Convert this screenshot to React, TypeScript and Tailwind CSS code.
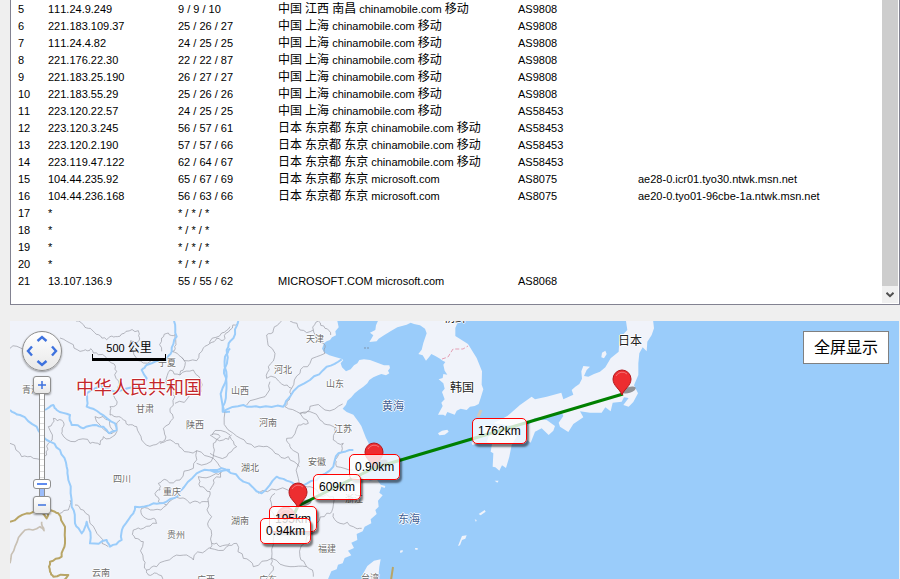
import React, { useState } from "react";

type Hop = { n: number; ip: string; rtt: string; place?: string; asn?: string; host?: string };

const hops: Hop[] = [
  { n: 5, ip: "111.24.9.249", rtt: "9 / 9 / 10", place: "中国 江西 南昌 chinamobile.com 移动", asn: "AS9808" },
  { n: 6, ip: "221.183.109.37", rtt: "25 / 26 / 27", place: "中国 上海 chinamobile.com 移动", asn: "AS9808" },
  { n: 7, ip: "111.24.4.82", rtt: "24 / 25 / 25", place: "中国 上海 chinamobile.com 移动", asn: "AS9808" },
  { n: 8, ip: "221.176.22.30", rtt: "22 / 22 / 87", place: "中国 上海 chinamobile.com 移动", asn: "AS9808" },
  { n: 9, ip: "221.183.25.190", rtt: "26 / 27 / 27", place: "中国 上海 chinamobile.com 移动", asn: "AS9808" },
  { n: 10, ip: "221.183.55.29", rtt: "25 / 26 / 26", place: "中国 上海 chinamobile.com 移动", asn: "AS9808" },
  { n: 11, ip: "223.120.22.57", rtt: "24 / 25 / 25", place: "中国 上海 chinamobile.com 移动", asn: "AS58453" },
  { n: 12, ip: "223.120.3.245", rtt: "56 / 57 / 61", place: "日本 东京都 东京 chinamobile.com 移动", asn: "AS58453" },
  { n: 13, ip: "223.120.2.190", rtt: "57 / 57 / 66", place: "日本 东京都 东京 chinamobile.com 移动", asn: "AS58453" },
  { n: 14, ip: "223.119.47.122", rtt: "62 / 64 / 67", place: "日本 东京都 东京 chinamobile.com 移动", asn: "AS58453" },
  { n: 15, ip: "104.44.235.92", rtt: "65 / 67 / 69", place: "日本 东京都 东京 microsoft.com", asn: "AS8075", host: "ae28-0.icr01.tyo30.ntwk.msn.net" },
  { n: 16, ip: "104.44.236.168", rtt: "56 / 63 / 66", place: "日本 东京都 东京 microsoft.com", asn: "AS8075", host: "ae20-0.tyo01-96cbe-1a.ntwk.msn.net" },
  { n: 17, ip: "*", rtt: "* / * / *" },
  { n: 18, ip: "*", rtt: "* / * / *" },
  { n: 19, ip: "*", rtt: "* / * / *" },
  { n: 20, ip: "*", rtt: "* / * / *" },
  { n: 21, ip: "13.107.136.9", rtt: "55 / 55 / 62", place: "MICROSOFT.COM microsoft.com", asn: "AS8068" },
];

// Chinese runs are set one pixel larger than the Latin text around them.
function Mixed({ text }: { text: string }) {
  return (
    <>
      {text.split(/([\u4e00-\u9fff]+)/).map((part, i) =>
        i % 2 ? <span key={i} className="text-[12px]">{part}</span> : part,
      )}
    </>
  );
}

function HopTable() {
  return (
    <table className="ml-[7px] mt-px grow table-fixed border-collapse self-start text-[11px] leading-[17px] text-black [font-kerning:none]">
      <colgroup>
        <col className="w-[30px]" />
        <col className="w-[130px]" />
        <col className="w-[100px]" />
        <col className="w-[240px]" />
        <col className="w-[120px]" />
        <col />
      </colgroup>
      <tbody>
        {hops.map((h) => (
          <tr key={h.n} className="h-[17px] whitespace-nowrap align-top">
            <td className="p-0">{h.n}</td>
            <td className="p-0">{h.ip}</td>
            <td className="p-0">{h.rtt}</td>
            <td className="p-0"><div className="h-[17px]"><Mixed text={h.place ?? ""} /></div></td>
            <td className="p-0">{h.asn}</td>
            <td className="p-0">{h.host}</td>
          </tr>
        ))}
      </tbody>
    </table>
  );
}

// Deterministic midpoint displacement: gives straight segments the jitter of a real border.
function rough(points: number[], amount: number) {
  let pts: [number, number][] = [];
  for (let i = 0; i < points.length; i += 2) pts.push([points[i], points[i + 1]]);
  let seed = points.length * 37 + Math.round(points[0]) + 11;
  const rnd = () => {
    seed = (seed * 1103515245 + 12345) % 2147483648;
    return seed / 2147483648 - 0.5;
  };
  for (let pass = 0; pass < 2; pass++) {
    const next: [number, number][] = [pts[0]];
    for (let i = 1; i < pts.length; i++) {
      const [x0, y0] = pts[i - 1];
      const [x1, y1] = pts[i];
      const len = Math.hypot(x1 - x0, y1 - y0);
      const d = rnd() * len * amount;
      if (len > 8) next.push([(x0 + x1) / 2 - ((y1 - y0) / len) * d, (y0 + y1) / 2 + ((x1 - x0) / len) * d]);
      next.push(pts[i]);
    }
    pts = next;
  }
  return "M" + pts.map(([x, y]) => `${x.toFixed(1)},${y.toFixed(1)}`).join(" ");
}

const westBorders = [
  [228, 33, 255, 52, 275, 59, 295, 74, 320, 89, 330, 80, 352, 80, 378, 64, 415, 62, 418, 82, 410, 99, 392, 92, 390, 114, 402, 134, 430, 159, 480, 150],
  [30, 115, 70, 118],
  [180, 84, 220, 104, 250, 122, 272, 116, 295, 134, 335, 159, 350, 184, 358, 224, 340, 254, 350, 284, 330, 290, 330, 315, 345, 320],
  [485, 124, 485, 84, 505, 69, 525, 74, 528, 104, 515, 124, 545, 142, 590, 152, 610, 114, 630, 94, 665, 69, 690, 50],
  [545, 142, 552, 175, 540, 195, 510, 180, 498, 214, 505, 239, 525, 260, 520, 285, 510, 300, 520, 325, 490, 355, 495, 390, 480, 400],
  [540, 195, 580, 180, 600, 205, 604, 245, 570, 255, 525, 280],
  [345, 320, 365, 325, 385, 345, 410, 350, 425, 390, 460, 405, 480, 395, 520, 395, 545, 415, 590, 422, 640, 445, 665, 475],
  [30, 400, 65, 440, 100, 445, 140, 435, 145, 400, 145, 350, 160, 325, 185, 330, 190, 350, 185, 370, 225, 395, 270, 400, 300, 405, 310, 380, 345, 375, 360, 330],
  [285, 320, 330, 330, 345, 365, 325, 370, 300, 345, 285, 320],
  [635, 375, 660, 380, 640, 400, 640, 440, 590, 460],
  [635, 375, 690, 375],
  [590, 422, 580, 475, 540, 510, 500, 510, 475, 520, 480, 540, 465, 550, 475, 575, 500, 585, 540, 565, 570, 580, 600, 580, 625, 575, 630, 545, 600, 530, 595, 500, 640, 495, 665, 480],
  [500, 585, 460, 600, 425, 595, 430, 620, 460, 625, 470, 640, 430, 655, 400, 660, 405, 685, 430, 695, 430, 750, 440, 780, 470, 770, 520, 740, 560, 735, 580, 750, 620, 720, 635, 700, 625, 650, 635, 620, 625, 575],
  [440, 780, 445, 795, 470, 790, 490, 812],
  [635, 700, 660, 710, 690, 700],
  [180, 610, 205, 600, 210, 570],
  [225, 585, 250, 600, 270, 640, 300, 680, 325, 710],
];

const eastBorders = [
  [0, 100, 20, 85, 45, 85, 60, 60, 85, 40],
  [215, 33, 190, 60, 170, 75, 195, 130, 175, 170, 170, 205, 215, 222, 245, 235, 270, 190, 300, 160, 345, 130, 345, 105, 320, 85, 310, 60, 325, 33],
  [240, 33, 270, 60, 310, 60],
  [325, 33, 345, 55, 362, 75],
  [180, 215, 165, 260, 110, 285],
  [245, 235, 240, 260, 225, 290, 270, 310, 300, 289, 345, 300, 398, 282],
  [45, 305, 70, 370, 110, 400, 160, 410, 195, 430, 235, 440, 268, 470],
  [270, 310, 300, 305, 330, 330, 360, 345, 370, 390, 400, 400, 390, 430, 375, 450, 380, 470, 430, 480],
  [270, 310, 295, 340, 265, 345, 230, 385, 240, 410, 265, 430, 270, 530],
  [0, 375, 40, 390, 65, 375],
  [0, 430, 50, 440, 80, 410, 60, 380],
  [145, 550, 200, 540, 270, 530, 300, 530, 330, 560, 370, 560, 365, 605, 350, 610, 320, 640, 290, 680, 270, 740, 290, 770, 310, 800],
  [370, 610, 390, 640, 430, 650, 455, 655],
  [195, 550, 185, 590, 195, 630, 190, 690, 185, 745],
  [0, 715, 50, 710, 80, 700, 100, 745, 130, 770, 185, 745, 240, 770, 290, 770],
  [0, 540, 10, 510, 40, 480],
  [185, 745, 190, 780, 150, 812],
];

const westRivers = [
  [522, 33, 530, 80, 515, 125, 500, 150, 440, 165, 425, 180, 440, 205, 410, 230, 345, 245, 300, 225, 260, 250, 260, 290, 300, 310, 345, 340, 350, 360, 330, 370, 310, 350, 285, 345, 250, 355, 215, 345, 210, 315, 170, 300, 160, 285, 135, 300],
  [30, 300, 60, 315, 110, 350, 140, 390, 180, 420, 200, 470, 205, 510, 215, 590, 225, 640, 245, 670, 260, 635, 270, 700, 320, 690, 330, 710, 365, 690, 370, 650, 400, 610, 405, 590, 460, 580, 500, 575, 540, 545, 590, 490, 640, 480, 690, 480],
  [690, 115, 675, 140, 680, 200, 665, 270, 670, 305, 690, 305],
];

const eastRivers = [
  [85, 33, 70, 85, 50, 120, 52, 150, 42, 190, 48, 250, 38, 305, 100, 285, 150, 292, 220, 290, 240, 260, 300, 210, 350, 170, 395, 148],
  [0, 480, 50, 480, 100, 515, 155, 550, 200, 500, 240, 515, 265, 540, 320, 510, 370, 470, 385, 430, 430, 420],
];

function Pin({ x, y }: { x: number; y: number }) {
  return (
    <g transform={`translate(${x} ${y})`}>
      <ellipse cx="7" cy="-5" rx="7" ry="3" transform="rotate(-18 7 -5)" fill="#000" opacity=".4" />
      <path d="M0,0 C-2,-6 -9,-9 -9,-16 A9,9 0 0 1 9,-16 C9,-9 2,-6 0,0Z" fill="#ed2d30" stroke="#b4171c" strokeWidth="1" />
      <path d="M-6,-19 A7,7 0 0 1 5,-21" fill="none" stroke="#f47274" strokeWidth="1" />
    </g>
  );
}

function MapDrawing() {
  return (
    <svg className="absolute left-0 top-0 h-[258px] w-[889px]" viewBox="10 321 889 258" aria-hidden="true">
      {/* land */}
      <g fill="#f0f3fa">
        <g transform="translate(210 310) scale(.33333)">
          <path d="M-700,20 L382,33 386,52 376,64 378,76 366,82 360,90 350,94 342,100 336,116 344,128 358,136 378,142 394,146 400,150 392,160 396,172 408,184 422,178 432,166 442,160 448,150 462,148 480,150 496,156 506,160 522,166 538,166 540,174 534,182 538,190 528,196 514,192 504,196 490,202 478,210 472,220 460,230 446,240 434,250 424,262 412,272 408,284 398,296 410,306 430,314 446,336 454,348 460,364 468,384 476,400 480,430 492,470 470,488 455,500 480,512 500,508 515,528 508,548 518,556 504,572 506,590 496,600 500,612 482,628 484,640 464,650 458,664 440,672 442,690 424,698 432,714 414,722 424,736 404,744 398,760 384,764 380,778 364,784 352,812 L-700,812Z" />
          <path d="M455,812 L460,790 472,768 492,752 512,748 508,770 504,812Z" />
        </g>
        <g transform="translate(310 318) scale(.33333)">
          <path d="M205,6 L198,22 196,36 180,44 190,52 184,62 178,72 200,70 206,62 222,52 244,38 262,28 276,24 290,20 302,14 312,18 330,22 345,32 350,46 340,75 335,95 325,108 338,112 348,128 358,116 364,108 376,114 390,122 398,128 406,132 400,140 404,158 412,170 400,168 398,180 386,184 400,196 404,212 396,222 404,244 394,254 398,264 384,290 400,290 406,294 412,282 434,290 440,278 452,272 470,276 480,266 494,264 506,258 512,240 520,214 515,200 516,160 500,120 474,78 436,54 436,30 446,6Z" />
          <path d="M384,346 L396,338 412,335 416,341 404,350 388,352Z" />
        </g>
        <g transform="translate(420 310) scale(.33333)">
          <path d="M616,20 L622,60 608,75 598,95 596,125 572,145 556,172 540,185 522,192 505,200 492,198 500,180 510,170 490,168 484,184 486,206 478,222 466,230 455,240 460,254 430,268 424,248 380,260 345,268 335,260 300,285 262,318 220,340 300,350 345,324 400,318 425,306 430,318 416,338 420,350 445,366 460,342 490,322 480,304 510,308 545,308 556,292 572,304 578,278 605,275 612,262 626,264 610,285 626,290 640,276 654,250 642,226 655,195 655,160 658,130 668,112 680,124 682,95 695,75 702,55 698,20Z" />
          <path d="M318,350 L345,330 380,330 405,348 400,362 386,375 365,355 345,365 332,398 318,388Z" />
          <path d="M190,345 L275,350 290,380 275,405 268,440 258,474 246,466 238,482 226,472 218,470 220,430 212,425 216,402 200,395 208,375 192,372Z" />
          <path d="M546,128 L556,122 560,132 552,145 544,142Z M224,512 L236,512 232,518Z M154,398 L168,392 172,402 158,405Z" />
        </g>
        <g transform="translate(360 440) scale(.33333)">
          <path d="M356,222 L374,210 377,215 362,226Z M344,238 L350,240 348,246Z M306,288 L320,286 316,296 306,300 300,316 294,318 302,298Z M120,332 L128,330 128,336 121,339Z M165,324 L173,324 173,329 166,329Z M62,134 L76,138 74,144 64,140Z" />
        </g>
      </g>
      {/* rivers and borders */}
      <g fill="none" strokeLinejoin="round">
        <g transform="translate(0 310) scale(.33333)">
          <g stroke="#94959f" strokeWidth="2">
            {westBorders.map((b, i) => <path key={i} d={rough(b, 0.5)} />)}
          </g>
          <g stroke="#9accfa" strokeWidth="6">
            {westRivers.map((b, i) => <path key={i} d={rough(b, 0.25)} />)}
          </g>
          <path d={rough([30, 635, 80, 610, 120, 605, 140, 625, 150, 600, 175, 610, 195, 650, 195, 700, 185, 740, 150, 755, 150, 785, 160, 800, 205, 795, 185, 815], 0.25)} stroke="#b8a566" strokeWidth="6" />
          <path d={rough([30, 760, 45, 710, 75, 660, 120, 650, 132, 662, 125, 635], 0.25)} stroke="#c8c0b4" strokeWidth="5" />
        </g>
        <g transform="translate(210 310) scale(.33333)">
          <g stroke="#94959f" strokeWidth="2">
            {eastBorders.map((b, i) => <path key={i} d={rough(b, 0.5)} />)}
          </g>
          <g stroke="#9accfa" strokeWidth="6">
            {eastRivers.map((b, i) => <path key={i} d={rough(b, 0.25)} />)}
          </g>
        </g>
        <path d="M442,359 L448,357 453,349 463,349 468,346" stroke="#e4a0b4" strokeDasharray="4 2" />
        <path d="M393,567 L391,580" stroke="#b8a566" strokeWidth="2" />
        <path d="M481,410 L478,417" stroke="#cfc8bc" strokeWidth="3" />
        <path d="M364,348 h6" stroke="#7d93ab" strokeDasharray="2 1" />
      </g>
    </svg>
  );
}

function RouteDrawing() {
  return (
    <svg className="absolute left-0 top-0 h-[258px] w-[889px]" viewBox="10 321 889 258" aria-hidden="true">
      <path d="M623,394 L374,468 298,506 286,531" fill="none" stroke="#008000" strokeWidth="3" />
      <Pin x={286} y={532} />
      <Pin x={298} y={508} />
      <Pin x={374} y={468} />
      <Pin x={622} y={395} />
    </svg>
  );
}

type Label = { text: string; x: number; y: number };

const provinces: Label[] = [
  { text: "宁夏", x: 157, y: 42 },
  { text: "青海", x: 21, y: 69 },
  { text: "甘肃", x: 135, y: 88 },
  { text: "陕西", x: 185, y: 104 },
  { text: "四川", x: 112, y: 158 },
  { text: "重庆", x: 162, y: 171 },
  { text: "贵州", x: 166, y: 214 },
  { text: "云南", x: 91, y: 252 },
  { text: "广西", x: 196, y: 259 },
  { text: "天津", x: 305, y: 18 },
  { text: "河北", x: 273, y: 49 },
  { text: "山东", x: 325, y: 63 },
  { text: "山西", x: 230, y: 70 },
  { text: "河南", x: 258, y: 102 },
  { text: "江苏", x: 333, y: 108 },
  { text: "安徽", x: 307, y: 141 },
  { text: "湖北", x: 240, y: 147 },
  { text: "浙江", x: 344, y: 178 },
  { text: "湖南", x: 230, y: 200 },
  { text: "福建", x: 317, y: 228 },
  { text: "广东", x: 258, y: 259 },
  { text: "台湾", x: 360, y: 257 },
];

const seas: Label[] = [
  { text: "黄海", x: 383, y: 85 },
  { text: "东海", x: 399, y: 198 },
];

const countries: Label[] = [
  { text: "韩国", x: 452, y: 67 },
  { text: "日本", x: 620, y: 20 },
  { text: "朝鲜", x: 445, y: -3 },
];

const distances: Label[] = [
  { text: "1762km", x: 462, y: 97 },
  { text: "0.90km", x: 339, y: 133 },
  { text: "609km", x: 303, y: 153 },
  { text: "195km", x: 259, y: 185 },
  { text: "0.94km", x: 250, y: 197 },
];

function Names({ items, className }: { items: Label[]; className: string }) {
  return (
    <>
      {items.map((l) => (
        <span
          key={l.text}
          className={`absolute -translate-x-1/2 -translate-y-1/2 whitespace-nowrap leading-none [text-shadow:1px_0_#fff,-1px_0_#fff,0_1px_#fff,0_-1px_#fff] ${className}`}
          style={{ left: l.x, top: l.y }}
        >
          {l.text}
        </span>
      ))}
    </>
  );
}

function PanButton() {
  return (
    <button
      type="button"
      aria-label="平移"
      className="flex h-10 w-10 items-center justify-center rounded-full border border-[#8f8f8f] bg-gradient-to-b from-white to-[#e8e8e8] shadow-[0_1px_2px_rgba(0,0,0,0.4)]"
    >
      <svg viewBox="0 0 38 38" className="h-[38px] w-[38px]" fill="none" stroke="#3e72de" strokeWidth="2.4" aria-hidden="true">
        <path d="M14.500,9 L19,5 23.500,9 M14.500,29 L19,33 23.500,29 M9,14.500 L5,19 9,23.500 M29,14.500 L33,19 29,23.500" />
      </svg>
    </button>
  );
}

function ZoomButton({ label, plus }: { label: string; plus?: boolean }) {
  return (
    <button
      type="button"
      aria-label={label}
      className="flex h-[18px] w-[18px] items-center justify-center rounded-[3px] border border-[#8f8f8f] bg-gradient-to-b from-white to-[#e8e8e8] shadow-[0_1px_2px_rgba(0,0,0,0.4)]"
    >
      <svg viewBox="0 0 8 8" className="h-2 w-2" stroke="#3e72de" strokeWidth="1.5" aria-hidden="true">
        <path d={plus ? "M0,4 H8 M4,0 V8" : "M0,4 H8"} />
      </svg>
    </button>
  );
}

function ZoomControl() {
  const [level, setLevel] = useState(2);
  return (
    <div className="absolute left-3 top-[10px] flex flex-col items-center">
      <PanButton />
      <div className="mt-[5px] flex flex-col items-center">
        <ZoomButton label="放大" plus />
        <div className="relative flex flex-col items-center">
          <div className="h-[85px] w-[6px] border-x border-[#8f8f8f] bg-[repeating-linear-gradient(#fff_0_5px,#ddd_5px_6px)]" />
          <div className="flex h-[10px] w-[18px] items-center justify-center rounded-[3px] border border-[#8f8f8f] bg-white">
            <div className="h-[2px] w-[10px] bg-[#5f8cf0]" />
          </div>
          <div className="h-[7px] w-[6px] border-x border-[#8f8f8f] bg-[#9bbcfa]" />
          <input
            type="range"
            aria-label="缩放级别"
            min={0}
            max={18}
            value={level}
            onChange={(e) => setLevel(Number(e.target.value))}
            className="absolute inset-0 h-full w-full cursor-pointer opacity-0 [direction:rtl] [writing-mode:vertical-lr]"
          />
        </div>
        <ZoomButton label="缩小" />
      </div>
    </div>
  );
}

function RouteMap() {
  return (
    <section className="relative ml-[10px] mr-px mt-4 h-[258px] grow overflow-hidden bg-[#9accfa]">
      <MapDrawing />
      <Names items={provinces} className="text-[9px] text-[#6c6c6c]" />
      <Names items={seas} className="text-[11px] text-[#3f5f95]" />
      <Names items={countries} className="text-[12px] text-[#222]" />
      <Names items={[{ text: "中华人民共和国", x: 129, y: 67 }]} className="text-[18px] text-[#c3272b]" />
      <RouteDrawing />
      {distances.map((d) => (
        <span
          key={d.text}
          className="absolute flex h-[26px] items-center whitespace-nowrap rounded-[5px] border border-[#f00] bg-white/80 px-[5px] text-[12px] text-black shadow-[2px_3px_2px_rgba(0,0,0,0.5)]"
          style={{ left: d.x, top: d.y }}
        >
          {d.text}
        </span>
      ))}
      <div className="absolute left-[82px] top-[19px] w-[74px] text-center text-[11px] leading-4 text-black">
        <div className="h-4"><Mixed text="500 公里" /></div>
        <div className="-mt-[2px] h-[7px] border-x border-b-[3px] border-black" />
      </div>
      <ZoomControl />
      <button
        type="button"
        className="absolute right-[10px] top-[10px] h-[33px] w-[86px] border border-[#808080] bg-white text-[16px] text-black"
      >
        全屏显示
      </button>
    </section>
  );
}

export default function App() {
  return (
    <main className="flex min-h-screen flex-col bg-[#efefef] font-['Liberation_Sans','Noto_Sans_CJK_SC',sans-serif]">
      <section className="ml-[10px] flex h-[305px] border-x border-b border-[#828291] bg-white">
        <HopTable />
        <div className="mb-px mr-px flex w-4 flex-col bg-[#cdcdcd]">
          <div className="grow" />
          <button type="button" aria-label="向下滚动" className="flex h-[17px] items-center justify-center bg-[#f0f0f0]">
            <svg viewBox="0 0 8 6" className="h-[6px] w-2" fill="none" stroke="#505050" strokeWidth="2" aria-hidden="true">
              <path d="M0.500,0.800 L4,4.200 7.500,0.800" />
            </svg>
          </button>
        </div>
      </section>
      <RouteMap />
    </main>
  );
}
